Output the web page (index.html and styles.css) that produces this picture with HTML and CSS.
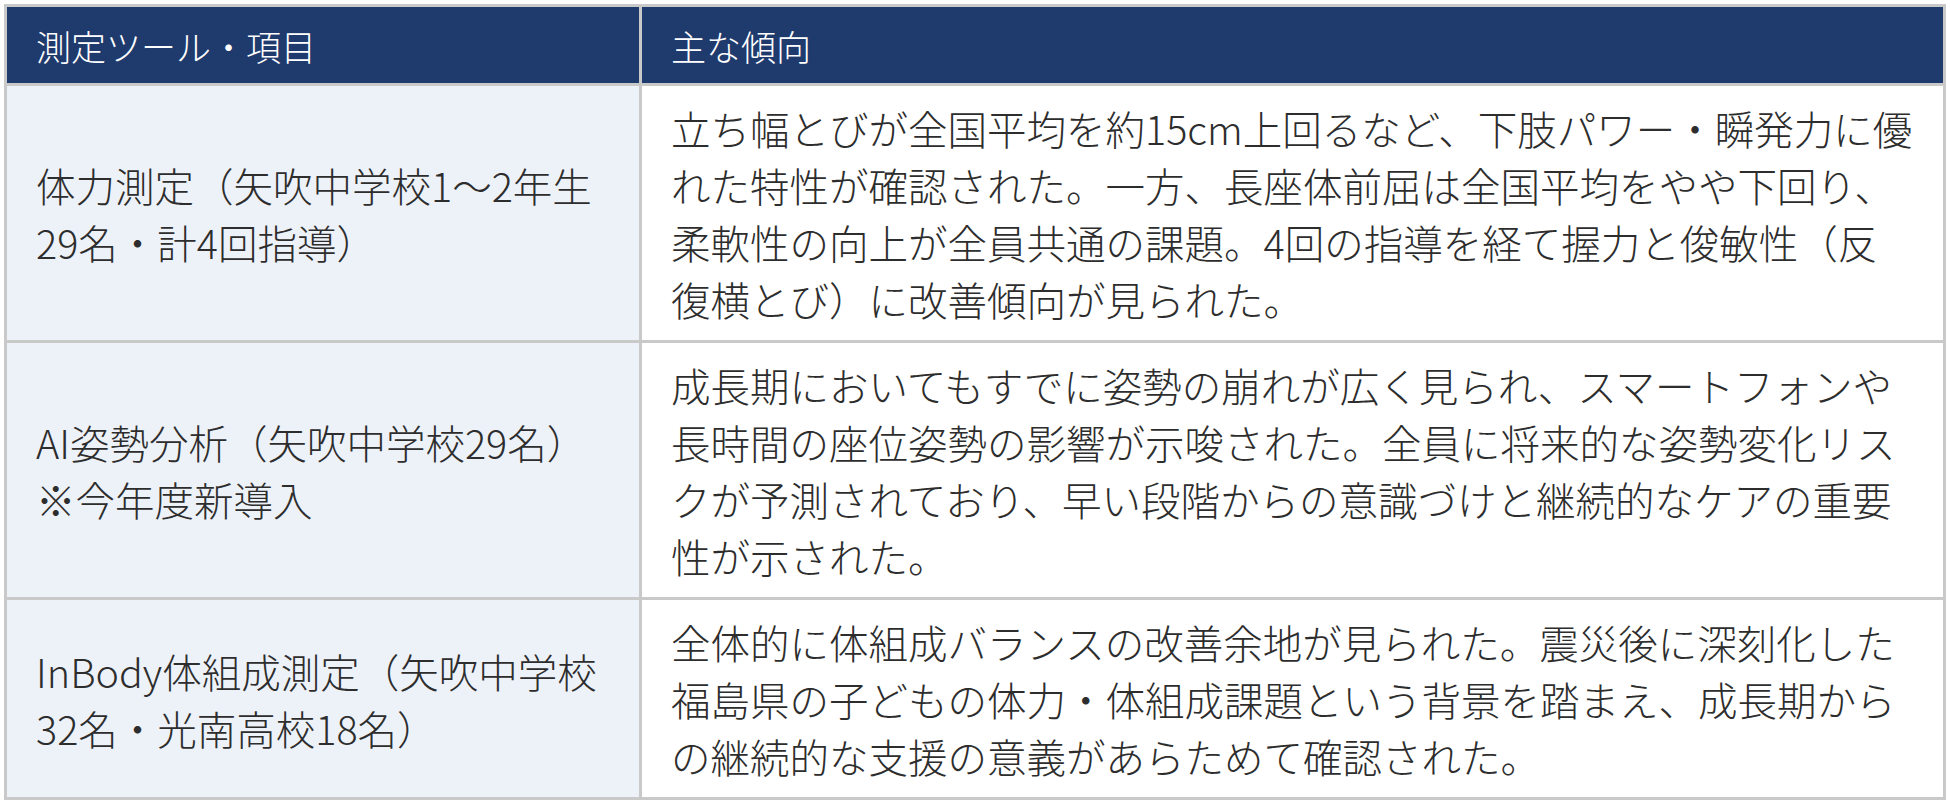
FILE: index.html
```html
<!DOCTYPE html>
<html lang="ja">
<head>
<meta charset="utf-8">
<title>測定結果</title>
<link rel="stylesheet" href="styles.css">
</head>
<body>
<table class="results">
  <colgroup>
    <col class="col-tool">
    <col class="col-trend">
  </colgroup>
  <thead>
    <tr>
      <th class="head-cell">測定ツール・項目</th>
      <th class="head-cell">主な傾向</th>
    </tr>
  </thead>
  <tbody>
    <tr class="row-4">
      <td class="tool-cell">体力測定（矢吹中学校1～2年生<br>29名・計4回指導）</td>
      <td class="trend-cell">立ち幅とびが全国平均を約15cm上回るなど、下肢パワー・瞬発力に優<br>れた特性が確認された。一方、長座体前屈は全国平均をやや下回り、<br>柔軟性の向上が全員共通の課題。4回の指導を経て握力と俊敏性（反<br>復横とび）に改善傾向が見られた。</td>
    </tr>
    <tr class="row-4">
      <td class="tool-cell">AI姿勢分析（矢吹中学校29名）<br>※今年度新導入</td>
      <td class="trend-cell">成長期においてもすでに姿勢の崩れが広く見られ、スマートフォンや<br>長時間の座位姿勢の影響が示唆された。全員に将来的な姿勢変化リス<br>クが予測されており、早い段階からの意識づけと継続的なケアの重要<br>性が示された。</td>
    </tr>
    <tr class="row-3">
      <td class="tool-cell">InBody体組成測定（矢吹中学校<br>32名・光南高校18名）</td>
      <td class="trend-cell">全体的に体組成バランスの改善余地が見られた。震災後に深刻化した<br>福島県の子どもの体力・体組成課題という背景を踏まえ、成長期から<br>の継続的な支援の意義があらためて確認された。</td>
    </tr>
  </tbody>
</table>
</body>
</html>
```

FILE: styles.css
```css
html, body {
  margin: 0;
  padding: 0;
  background: #ffffff;
}

body {
  padding: 4px;
  font-family: "Noto Sans CJK JP", "Noto Sans", sans-serif;
  font-weight: 300;
  color: #2d2d2d;
}

.results {
  width: 1942px;
  border-collapse: collapse;
  table-layout: fixed;
  border: 3px solid #c9c9c9;
}

.col-tool {
  width: 635px;
}

.head-cell {
  background: #1f3a6d;
  color: #ffffff;
  font-weight: 300;
  font-size: 35px;
  line-height: 51px;
  text-align: left;
  padding: 13px 29px 12px;
  border: 3px solid #c9c9c9;
}

.tool-cell,
.trend-cell {
  font-size: 39.5px;
  line-height: 57px;
  padding: 13px 29px 13px;
  border: 3px solid #c9c9c9;
  white-space: nowrap;
  letter-spacing: 0;
}

.tool-cell {
  background: #edf2f9;
  vertical-align: middle;
}

.trend-cell {
  background: #ffffff;
  vertical-align: middle;
}
```
